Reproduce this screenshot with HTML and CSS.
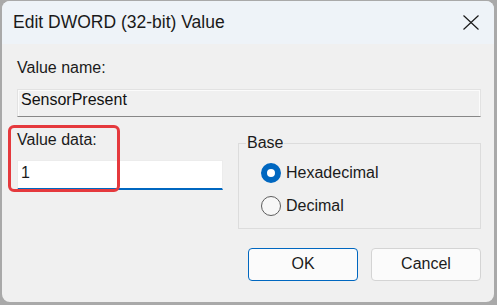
FILE: index.html
```html
<!DOCTYPE html>
<html lang="en">
<head>
<meta charset="utf-8">
<title>Edit DWORD (32-bit) Value</title>
<link rel="stylesheet" href="styles.css">
</head>
<body>
<div class="dialog">
  <div class="titlebar">
    <span class="title">Edit DWORD (32-bit) Value</span>
    <span class="close" aria-label="Close">
      <svg width="16" height="15" viewBox="0 0 16 15"><path d="M0.5 0.5 L15.5 14.5 M15.5 0.5 L0.5 14.5" stroke="#1a1a1a" stroke-width="1.2" fill="none"/></svg>
    </span>
  </div>
  <div class="content">
    <div class="label">Value name:</div>
    <div class="readonly">SensorPresent</div>
    <div class="row">
      <div class="data">
        <div class="label">Value data:</div>
        <div class="input">1</div>
        <div class="highlight"></div>
      </div>
      <fieldset class="base">
        <legend>Base</legend>
        <div class="radio-row"><span class="radio checked"></span><span>Hexadecimal</span></div>
        <div class="radio-row"><span class="radio"></span><span>Decimal</span></div>
      </fieldset>
    </div>
    <div class="buttons">
      <span class="btn primary">OK</span>
      <span class="btn">Cancel</span>
    </div>
  </div>
</div>
</body>
</html>
```

FILE: styles.css
```css
* { box-sizing: border-box; }
html, body { margin: 0; }
body {
  background: #a9a9a9;
  padding: 1px 3px 3px 2px;
  font-family: "Liberation Sans", Arial, sans-serif;
  font-size: 16px;
  color: #1b1b1b;
}
.dialog {
  width: 492px;
  height: 301px;
  background: #f0f0f0;
  border-radius: 8px;
  overflow: hidden;
  display: flex;
  flex-direction: column;
}
.titlebar {
  height: 43px;
  background: #eef3f8;
  display: flex;
  align-items: center;
  justify-content: space-between;
  padding: 0 15px 0 11px;
}
.title { font-size: 17.5px; color: #1a1a1a; }
.close { display: flex; }
.content {
  padding: 14px 13px 0 15px;
  display: flex;
  flex-direction: column;
}
.label { line-height: 20px; }
.readonly {
  margin-top: 11px;
  height: 28px;
  line-height: 20px;
  padding: 0 3px 6px;
  display: flex;
  align-items: center;
  color: #111;
  border: 1px solid #e2e2e2;
  border-bottom-color: #878787;
  box-shadow: inset 1px 1px 0 #fbfbfb, inset -1px 0 0 #fbfbfb;
}
.row {
  margin-top: 13px;
  display: flex;
  align-items: flex-start;
  gap: 15px;
}
.data {
  position: relative;
  width: 206px;
}
.input {
  margin-top: 10px;
  height: 30px;
  background: #fff;
  border: 1px solid #ececec;
  border-bottom: 2px solid #0067c0;
  padding: 0 3px 3px;
  display: flex;
  align-items: center;
}
.highlight {
  position: absolute;
  left: -9px;
  top: -5px;
  width: 112px;
  height: 67px;
  border: 3px solid #e5393d;
  border-radius: 6px;
}
.base {
  flex: 1;
  margin: 3px 0 0;
  padding: 10px 0 12px 22px;
  border: 1px solid #dcdcdc;
  display: flex;
  flex-direction: column;
  gap: 12.5px;
}
.base legend {
  line-height: 20px;
  padding: 0 1px;
  margin-left: -15px;
}
.radio-row {
  display: flex;
  align-items: center;
  gap: 5px;
  height: 20px;
  line-height: 20px;
}
.radio {
  width: 20px;
  height: 20px;
  border-radius: 50%;
  border: 1px solid #5d5d5d;
  background: #f7f7f7;
  flex: none;
}
.radio.checked {
  border: 6px solid #0067c0;
  background: #fff;
}
.buttons {
  margin-top: 19px;
  display: flex;
  justify-content: flex-end;
  gap: 13px;
}
.btn {
  width: 110px;
  height: 33px;
  border-radius: 4px;
  border: 1px solid #d4d4d4;
  background: #fbfbfb;
  display: flex;
  align-items: center;
  justify-content: center;
  padding-bottom: 1px;
}
.btn.primary { border-color: #0067c0; }
```
